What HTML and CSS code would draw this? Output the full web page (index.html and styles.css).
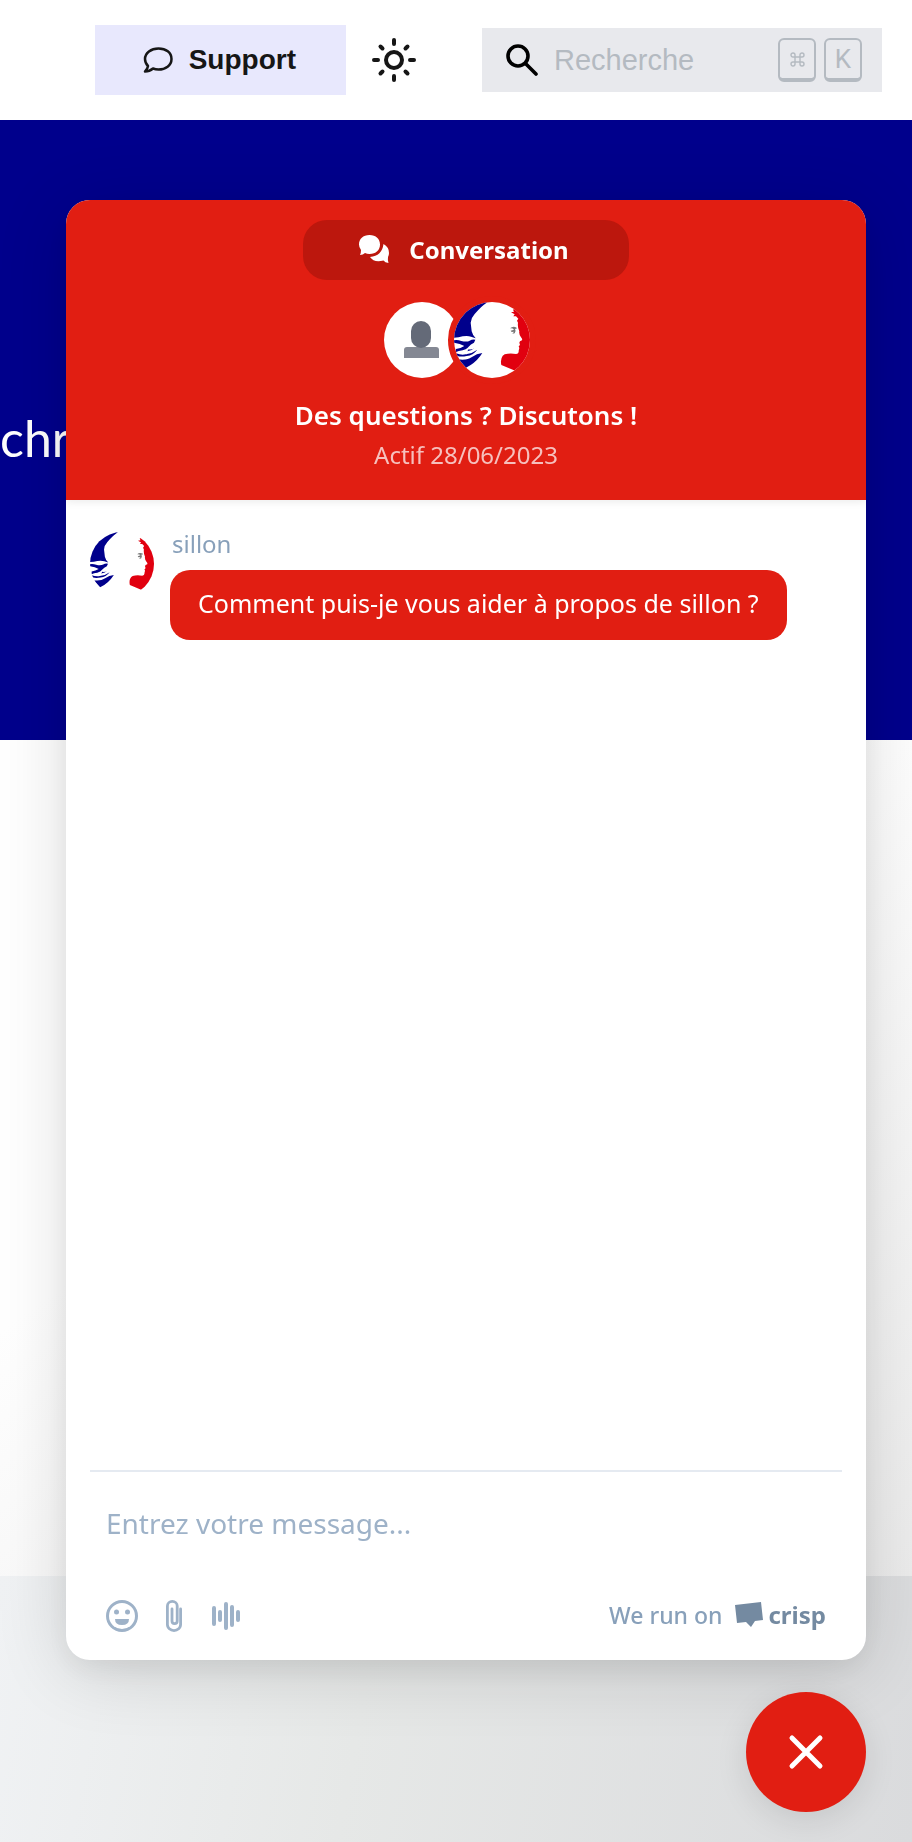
FILE: index.html
```html
<!DOCTYPE html>
<html lang="fr">
<head>
<meta charset="utf-8">
<meta name="viewport" content="width=device-width, initial-scale=1">
<title>Support</title>
<link rel="stylesheet" href="styles.css">
</head>
<body>
<svg class="defs" aria-hidden="true">
  <defs>
    <clipPath id="disc"><circle cx="366" cy="150" r="114"/></clipPath>
    <symbol id="marianne" viewBox="252 36 228 228">
      <g clip-path="url(#disc)">
        <rect x="252" y="36" width="228" height="228" fill="#fff"/>
        <path fill="#00008c" d="M350 30H250V143Q266 143 278 139Q294 137 303 140L317 145Q308 136 305 124L302 98Q303 84 314 72Q334 48 350 38Z"/>
        <path fill="#00008c" d="M250 151Q262 148 274 153Q290 157 299 152Q307 147 316 149L312 158Q302 162 296 170Q290 178 278 181Q266 182 256 187L258 177Q272 175 283 168Q270 160 250 158Z"/>
        <path fill="#00008c" d="M296 178Q306 180 314 174Q306 182 292 184Z"/>
        <path fill="#00008c" d="M258 190Q274 196 287 193Q306 191 322 179Q309 196 290 198Q274 201 262 198Z"/>
        <path fill="#00008c" d="M337 189Q320 191 306 201Q290 212 264 208L288 233Q318 219 337 189Z"/>
        <path fill="#e1000f" d="M423 67L432 65L429 59L445 50H490V262L432 241L394 225Q389 202 404 193Q420 188 438 192Q447 191 446 182L448 174L446 169L450 165L448 158Q448 153 456 151Q458 148 453 142Q446 132 448 124Q442 112 444 98L441 92L445 86L438 79H430L434 73Z"/>
        <path fill="#777" d="M420 115Q429 107 440 113L439 117L435 116Q439 123 434 130L427 131L432 125L425 126L422 122L432 119Q428 114 420 115Z"/>
      </g>
    </symbol>
  </defs>
</svg>

<header class="topbar">
  <button class="support" type="button">
    <svg width="30" height="26" viewBox="0 0 30 26" fill="none" stroke="#161616" stroke-width="2.500" stroke-linejoin="round" aria-hidden="true"><path d="M5 19Q2 16 2 12C2 6 8 1.500 15.500 1.500s13 4 13 10.500-6 10.500-13 10.500q-3 0-5.500-1-3.500 3-8 3 2.500-2 3-5.500Z"/></svg>
    <span>Support</span>
  </button>
  <button class="theme" type="button" aria-label="Changer de thème">
    <svg width="44" height="44" viewBox="0 0 44 44" fill="none" stroke="#161616" stroke-width="4" stroke-linecap="round" aria-hidden="true"><circle cx="22" cy="22" r="8"/><path d="M22 2v4M22 38v4M2 22h4M38 22h4M8.500 8.500l2 2M33.500 33.500l2 2M35.500 8.500l-2 2M8.500 35.500l2-2"/></svg>
  </button>
  <label class="search">
    <svg width="32" height="32" viewBox="0 0 32 32" fill="none" stroke="#000" stroke-width="3.600" stroke-linecap="round" aria-hidden="true"><circle cx="12" cy="12" r="10"/><path d="M20 20l10 10"/></svg>
    <input type="search" placeholder="Recherche" aria-label="Recherche">
    <kbd><svg width="15" height="15" viewBox="0 0 15 15" fill="none" stroke="#b4bac1" stroke-width="1.400" aria-hidden="true"><path d="M5 5h5v5H5ZM5 5H3a2 2 0 1 1 2-2ZM10 5V3a2 2 0 1 1 2 2ZM10 10h2a2 2 0 1 1-2 2ZM5 10v2a2 2 0 1 1-2-2Z"/></svg></kbd>
    <kbd>K</kbd>
  </label>
</header>

<main>
  <section class="hero"><p>chr</p></section>
  <section class="content"></section>
  <section class="bottom"></section>
</main>

<aside class="chat" aria-label="Conversation">
  <header class="chat-head">
    <button class="tab" type="button">
      <svg width="30" height="28" viewBox="0 0 30 28" fill="#fff" aria-hidden="true"><path d="M10.500 0C17 0 21 4 21 9.500S17 19 10.500 19Q8 19 6 18Q4 20 1 20Q2 18 2 15Q0 12.500 0 9.500C0 4 4 0 10.500 0Z"/><path d="M24.500 9Q30 12 30 18Q30 20 29 22Q28.500 25 29.500 28Q26 27.500 24.500 25.500Q15 28 11 22Q23 21 24.500 9Z"/></svg>
      <span>Conversation</span>
    </button>
    <div class="avatars">
      <span class="avatar"><svg width="76" height="76" viewBox="0 0 76 76" aria-hidden="true"><path fill="#848893" d="M20 56v-8q0-3 3-3h29q3 0 3 3v8Z"/><rect x="27" y="19" width="20" height="27" rx="10" fill="#646a78"/></svg></span>
      <span class="avatar front"><svg width="76" height="76" aria-hidden="true"><use href="#marianne"/></svg></span>
    </div>
    <h2>Des questions ? Discutons !</h2>
    <p class="status">Actif 28/06/2023</p>
  </header>
  <div class="messages">
    <svg class="sender-pic" width="64" height="64" aria-hidden="true"><use href="#marianne"/></svg>
    <div>
      <p class="sender">sillon</p>
      <p class="bubble">Comment puis-je vous aider à propos de sillon ?</p>
    </div>
  </div>
  <form class="composer">
    <textarea rows="1" placeholder="Entrez votre message..." aria-label="Votre message"></textarea>
    <div class="tools">
      <button type="button" aria-label="Émojis"><svg width="32" height="32" viewBox="0 0 32 32" fill="#9eb2c8"><circle cx="16" cy="16" r="14.500" fill="none" stroke="#9eb2c8" stroke-width="3"/><circle cx="10.500" cy="12" r="2.500"/><circle cx="21.500" cy="12" r="2.500"/><path d="M9 19h14q0 6-7 6t-7-6Z"/></svg></button>
      <button type="button" aria-label="Joindre un fichier"><svg width="16" height="32" viewBox="0 0 16 32" fill="none" stroke="#9eb2c8" stroke-width="2.800" stroke-linecap="round"><path d="M14.600 9v15.500a6.600 6.100 0 0 1-13.200 0V6a4.900 4.600 0 0 1 9.800 0v15a2.600 2.600 0 0 1-5.200 0V9"/></svg></button>
      <button type="button" aria-label="Message audio"><svg width="28" height="32" viewBox="0 0 28 32" stroke="#9eb2c8" stroke-width="4" stroke-linecap="round"><path d="M2 8v16M8 12v8M14 4v24M20 7v18M26 12v8"/></svg></button>
      <a class="credit" href="#crisp"><span>We run on</span><svg width="28" height="26" viewBox="0 0 28 26" aria-hidden="true"><path fill="#748aa1" d="M0 3L26 0 28 18 20 19 16 25 11 20 2 21Z"/></svg><b>crisp</b></a>
    </div>
  </form>
</aside>

<button class="close" type="button" aria-label="Fermer">
  <svg width="36" height="36" viewBox="0 0 36 36" stroke="#fff" stroke-width="5" stroke-linecap="round" aria-hidden="true"><path d="M4 4l28 28M32 4L4 32"/></svg>
</button>
</body>
</html>
```

FILE: styles.css
```css
* { box-sizing: border-box; }
body {
  margin: 0;
  min-height: 100vh;
  display: flex;
  flex-direction: column;
  overflow-x: hidden;
  background: #fff;
  font-family: "Noto Sans", sans-serif;
}
h2, p { margin: 0; }
button {
  border: 0;
  padding: 0;
  background: none;
  font: inherit;
  color: inherit;
  cursor: pointer;
}
svg { display: block; flex: none; }
.defs { position: absolute; width: 0; height: 0; }

.topbar {
  height: 120px;
  padding: 0 30px;
  display: flex;
  align-items: center;
  justify-content: flex-end;
  font-family: "Liberation Sans", Arial, sans-serif;
  font-size: 28px;
}
.support {
  height: 70px;
  padding: 0 50px 0 48px;
  display: flex;
  align-items: center;
  gap: 16px;
  background: #e8e8fd;
  color: #161616;
  font-weight: 700;
}
.theme { margin: 0 66px 0 26px; }
.search {
  width: 400px;
  height: 64px;
  padding: 0 20px 0 24px;
  display: flex;
  align-items: center;
  gap: 8px;
  background: #e8e9ed;
}
.search input {
  flex: 1;
  min-width: 0;
  border: 0;
  padding: 0 8px;
  outline: 0;
  background: none;
  font: inherit;
  font-size: 29px;
}
.search input::placeholder { color: #b4bac1; opacity: 1; }
.search kbd {
  width: 38px;
  height: 44px;
  border: 2px solid #b4bac1;
  border-bottom-width: 4px;
  border-radius: 6px;
  display: flex;
  align-items: center;
  justify-content: center;
  color: #b4bac1;
  font: 26px Roboto, sans-serif;
}

main { flex: 1; display: flex; flex-direction: column; }
.hero {
  height: 620px;
  padding-top: 288px;
  background: #00008c;
  color: #fff;
  font: 50px/60px Lato, sans-serif;
  white-space: nowrap;
}
.content {
  height: 836px;
  background: linear-gradient(145deg, #fff 40%, #ebebeb);
}
.bottom {
  flex: 1;
  background: linear-gradient(100deg, #f0f2f4, #e6e8e7 40%, #dadbdd);
}

.chat {
  position: fixed;
  top: 200px;
  right: 46px;
  bottom: 182px;
  width: 800px;
  max-width: calc(100% - 92px);
  border-radius: 24px;
  overflow: hidden;
  display: flex;
  flex-direction: column;
  background: #fff;
  box-shadow: 0 10px 72px rgba(0, 0, 0, 0.14), 0 10px 28px rgba(0, 0, 0, 0.06);
}
.chat-head {
  height: 300px;
  padding-top: 20px;
  display: flex;
  flex-direction: column;
  align-items: center;
  background: #e11e12;
  color: #fff;
  box-shadow: 0 2px 8px rgba(0, 0, 0, 0.08);
}
.tab {
  width: 326px;
  height: 60px;
  padding: 0 4px 2px 0;
  border-radius: 24px;
  display: flex;
  align-items: center;
  justify-content: center;
  gap: 20px;
  background: #bc170d;
  font-size: 24px;
  font-weight: 700;
}
.avatars {
  margin: 16px 0 15px -12px;
  display: flex;
  align-items: center;
  height: 88px;
}
.avatar { border-radius: 50%; background: #fff; }
.avatar.front {
  margin-left: -12px;
  border: 6px solid #e11e12;
  background: #e11e12;
}
.chat-head h2 { font-size: 26px; font-weight: 600; line-height: 32px; }
.status {
  margin-top: 8px;
  color: #f6c0bd;
  font-size: 24px;
  line-height: 32px;
}
.messages {
  flex: 1;
  padding: 28px 24px;
  display: flex;
  align-items: flex-start;
  gap: 16px;
}
.sender-pic { margin-top: 4px; }
.sender {
  padding-left: 2px;
  color: #88a0ba;
  font-size: 24px;
  line-height: 32px;
}
.bubble {
  margin-top: 10px;
  padding: 15px 28px 19px;
  border-radius: 20px;
  background: #e11e12;
  color: #fff;
  font-size: 25px;
  line-height: 36px;
}
.composer {
  margin: 0 24px;
  padding: 31px 16px 28px;
  border-top: 2px solid #e5eaf1;
}
.composer textarea {
  display: block;
  width: 100%;
  height: 97px;
  border: 0;
  padding: 0;
  outline: 0;
  resize: none;
  background: none;
  font: 28px/40px "Noto Sans", sans-serif;
}
.composer textarea::placeholder { color: #9eb2c8; opacity: 1; }
.tools { display: flex; align-items: center; gap: 28px; }
.tools button:last-of-type { margin-left: 2px; }
.credit {
  margin-left: auto;
  padding-bottom: 2px;
  display: flex;
  align-items: center;
  gap: 13px;
  color: #88a0ba;
  font-size: 23px;
  font-weight: 500;
  line-height: 30px;
  text-decoration: none;
}
.credit b { margin-left: -8px; color: #748aa1; font-size: 24px; }
.close {
  position: fixed;
  right: 46px;
  bottom: 30px;
  width: 120px;
  height: 120px;
  border-radius: 50%;
  display: flex;
  align-items: center;
  justify-content: center;
  background: #e11e12;
  box-shadow: 0 8px 32px rgba(0, 0, 0, 0.1);
}
```
